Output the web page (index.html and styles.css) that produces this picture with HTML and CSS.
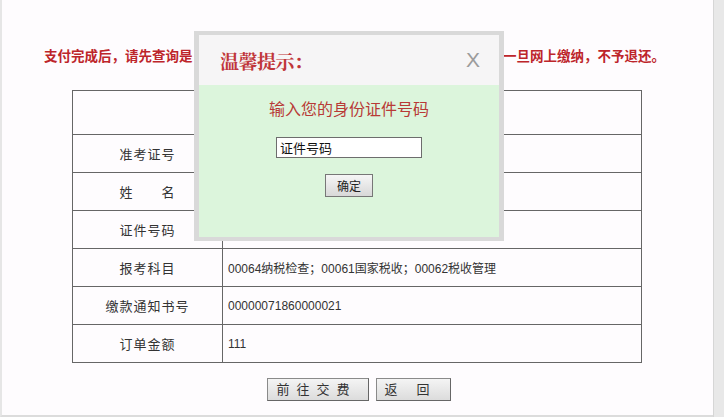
FILE: index.html
```html
<!DOCTYPE html>
<html lang="zh-CN">
<head>
<meta charset="utf-8">
<title>缴费确认</title>
<link rel="stylesheet" href="styles.css">
</head>
<body>
<div class="frame">
  <div class="page">
    <p class="notice"><span>支付完成后，请先查询是</span><span class="notice-end">一旦网上缴纳，不予退还。</span></p>
    <table class="info">
      <tr class="head"><td colspan="2"></td></tr>
      <tr><td class="label">准考证号</td><td class="value"></td></tr>
      <tr><td class="label">姓　　名</td><td class="value"></td></tr>
      <tr><td class="label">证件号码</td><td class="value"></td></tr>
      <tr><td class="label">报考科目</td><td class="value">00064纳税检查；00061国家税收；00062税收管理</td></tr>
      <tr><td class="label">缴款通知书号</td><td class="value">00000071860000021</td></tr>
      <tr><td class="label">订单金额</td><td class="value">111</td></tr>
    </table>
    <div class="actions">
      <button class="btn btn-pay" type="button">前往交费</button>
      <button class="btn btn-back" type="button">返　回</button>
    </div>

    <div class="modal">
      <div class="modal-title">
        <span class="modal-heading">温馨提示：</span>
        <span class="modal-close">X</span>
      </div>
      <div class="modal-body">
        <div class="modal-prompt">输入您的身份证件号码</div>
        <input class="modal-input" type="text" value="证件号码">
        <button class="modal-ok" type="button">确定</button>
      </div>
    </div>
  </div>
  <div class="scroll"></div>
</div>
</body>
</html>
```

FILE: styles.css
```css
html, body {
  margin: 0;
  padding: 0;
  background: #fefcfe;
}
body {
  font-family: "Liberation Sans", "Noto Sans CJK SC", sans-serif;
  color: #333;
  overflow: hidden;
}
.frame {
  display: flex;
  height: 417px;
  width: 724px;
}
.page {
  position: relative;
  width: 711px;
  height: 415px;
  border-left: 2px solid #e6e6e6;
  border-bottom: 2px solid #dcdcdc;
  background: #fefcfe;
}
.scroll {
  flex: 1;
  background: #e8e8e8;
  border-left: 1px solid #d6d6d6;
}
.notice {
  margin: 0;
  padding: 48px 48px 0 42px;
  display: flex;
  font-size: 13.5px;
  line-height: 18px;
  font-weight: bold;
  color: #bd252a;
  white-space: nowrap;
}
.notice-end {
  margin-left: auto;
}
.info {
  margin: 24px 0 0 70px;
  width: 570px;
  border-collapse: collapse;
  border: 1px solid #666;
}
.info td {
  border: 1px solid #666;
  height: 37px;
  padding: 0;
}
.info .head td {
  height: 43px;
}
.label {
  width: 149px;
  text-align: center;
  font-size: 13px;
  letter-spacing: 1px;
  color: #333;
}
.value {
  padding-left: 5px !important;
  font-size: 12px;
  color: #333;
}
.actions {
  display: flex;
  justify-content: center;
  gap: 7px;
  margin-top: 15px;
  padding-left: 2px;
}
.btn {
  height: 23px;
  margin: 0;
  padding: 0;
  border: 1px solid #8a8a8a;
  border-right-color: #666;
  border-bottom-color: #666;
  background: linear-gradient(#f4f4f4, #dcdcdc);
  font-family: "Liberation Sans", "Noto Sans CJK SC", sans-serif;
  font-size: 13px;
  color: #333;
  line-height: 21px;
  white-space: nowrap;
  text-align: left;
}
.btn-pay {
  width: 102px;
  letter-spacing: 7px;
  padding-left: 9px;
}
.btn-back {
  width: 75px;
  letter-spacing: 3px;
  padding-left: 8px;
}
.modal {
  position: absolute;
  left: 192px;
  top: 31px;
  width: 310px;
  height: 210px;
  box-sizing: border-box;
  border: 5px solid #d9d9d9;
  border-top-width: 4px;
  border-bottom-width: 4px;
  display: flex;
  flex-direction: column;
}
.modal-title {
  height: 50px;
  background: #f6f5f6;
  display: flex;
  align-items: center;
  justify-content: space-between;
  padding: 0 19px 0 21px;
}
.modal-heading {
  font-family: "Noto Serif CJK SC", "Noto Sans CJK SC", serif;
  font-size: 19px;
  font-weight: bold;
  color: #c0363a;
  letter-spacing: -0.5px;
}
.modal-close {
  font-family: "Liberation Sans", sans-serif;
  font-size: 21px;
  color: #9c9c9c;
}
.modal-body {
  flex: 1;
  background: #dcf5dc;
  display: flex;
  flex-direction: column;
  align-items: center;
  padding-top: 15px;
}
.modal-prompt {
  font-size: 16px;
  line-height: 20px;
  color: #b83a36;
}
.modal-input {
  margin-top: 17px;
  width: 146px;
  height: 21px;
  box-sizing: border-box;
  border: 1px solid #6d6d6d;
  background: #fff;
  padding: 0 3px;
  font-family: "Liberation Sans", "Noto Sans CJK SC", sans-serif;
  font-size: 13px;
  color: #111;
}
.modal-ok {
  margin-top: 16px;
  width: 48px;
  height: 23px;
  padding: 0;
  border: 1px solid #777;
  background: linear-gradient(#f6f6f6, #d8d8d8);
  font-family: "Liberation Sans", "Noto Sans CJK SC", sans-serif;
  font-size: 12px;
  color: #222;
}
```
